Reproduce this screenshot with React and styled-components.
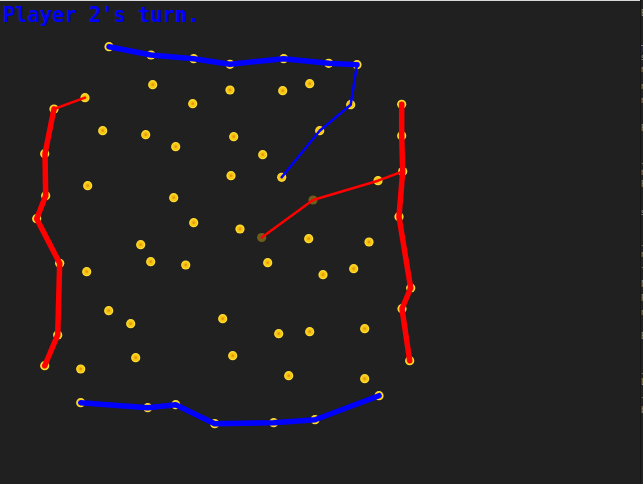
import styled, { createGlobalStyle } from "styled-components";

const GlobalStyle = createGlobalStyle`
  html, body {
    margin: 0;
    padding: 0;
    background: #202020;
  }
  body {
    font-family: "DejaVu Sans Mono", "Liberation Mono", monospace;
  }
`;

const Screen = styled.div`
  display: flex;
  width: 643px;
  height: 484px;
  overflow: hidden;
  background: #202020;
`;

const Board = styled.div`
  position: relative;
  width: 640px;
  height: 484px;
  flex: none;
  box-shadow: inset 0 1px 0 #d9d9d9;
`;

const Status = styled.h1`
  position: absolute;
  top: 5px;
  left: 3px;
  margin: 0;
  font-family: "DejaVu Sans Mono", "Liberation Mono", monospace;
  font-weight: bold;
  font-size: 20.4px;
  line-height: 20px;
  color: #0000ff;
  white-space: pre;
`;

const Canvas = styled.svg`
  display: block;
  width: 640px;
  height: 484px;
`;

const Sidebar = styled.div`
  flex: 1;
  display: flex;
  flex-direction: column;
  overflow: hidden;
  background: #222;
  border-left: 1px solid #151515;
`;

const SideLabel = styled.span`
  display: block;
  margin-top: ${(p) => p.$gap}px;
  font-family: "DejaVu Sans", sans-serif;
  font-size: 8px;
  line-height: 8px;
  color: #8a8a8a;
  white-space: nowrap;
`;

const dots = [
  [109, 46.7], [151, 55], [193.7, 58.7], [230, 64.3], [283.7, 58.7], [328.7, 63.3], [357, 64.7],
  [152.7, 84.7], [85, 97.7], [192.7, 103.7], [230, 90], [282.7, 90.7], [309.7, 83.7],
  [54, 109], [102.7, 130.7], [145.7, 134.7], [175.7, 146.7], [233.7, 136.7], [262.7, 154.7],
  [350.7, 104.7], [319.7, 130.7], [401.7, 104.3], [401.7, 135.7],
  [44.7, 153.7], [87.7, 185.7], [173.7, 197.7], [231, 175.7], [281.7, 177.3], [402.7, 171.5], [378, 180.7],
  [45.7, 195.7], [36.7, 218.7], [193.7, 222.7], [240, 229], [399, 216.7],
  [140.7, 244.7], [150.7, 261.7], [185.7, 265], [267.7, 262.7], [308.7, 238.7], [369, 242],
  [323, 274.7], [353.7, 268.7], [59.7, 263.3], [86.7, 271.7], [410.7, 288], [402, 308.7],
  [108.7, 310.7], [130.7, 323.7], [222.7, 318.7], [278.7, 333.7], [309.7, 331.7], [364.7, 328.7],
  [57.7, 335], [135.7, 357.7], [232.7, 355.7], [409.7, 360.7],
  [44.7, 365.7], [80.7, 369], [288.7, 375.7], [364.7, 378.7],
  [80.7, 402.7], [147.7, 407.7], [175.7, 404.7], [214.7, 423.7], [273.7, 422.7], [315, 419.7], [379, 395.7],
];

const visited = [
  [313, 200],
  [261.7, 237.5],
];

const paths = [
  // player 1 (red)
  { color: "#ff0000", width: 2.5, pts: [[85, 97.7], [54, 109]] },
  {
    color: "#ff0000",
    width: 5.5,
    pts: [[54, 109], [45, 153.7], [45.7, 195.7], [36.7, 218.7], [59.7, 263.3], [57.7, 335], [44.7, 365.7]],
  },
  {
    color: "#ff0000",
    width: 5.5,
    pts: [[401.7, 104.3], [401.7, 135.7], [402.7, 171.5], [399, 216.7], [410.7, 288], [402, 308.7], [409.7, 360.7]],
  },
  { color: "#ff0000", width: 2.5, pts: [[402.7, 171.5], [378, 180.7], [313, 200], [261.7, 237.5]] },
  // player 2 (blue)
  {
    color: "#0000ff",
    width: 5.5,
    pts: [[109, 46.7], [151, 55], [193.7, 58.7], [230, 64.3], [283.7, 58.7], [328.7, 63.3], [357, 64.7]],
  },
  { color: "#0000ff", width: 2.5, pts: [[357, 64.7], [350.7, 104.7], [319.7, 130.7], [281.7, 177.3]] },
  {
    color: "#0000ff",
    width: 5.5,
    pts: [[80.7, 402.7], [147.7, 407.7], [175.7, 404.7], [214.7, 423.7], [273.7, 422.7], [315, 419.7], [379, 395.7]],
  },
];

const sideLabels = [
  { gap: 10, text: "Ed" }, { gap: 28, text: "T·" }, { gap: 0, text: "s." },
  { gap: 4, text: "n:" }, { gap: 9, text: "n." }, { gap: 6, text: "r" },
  { gap: 20, text: "F" }, { gap: 28, text: "·" }, { gap: 0, text: "r·" },
  { gap: 4, text: "F" }, { gap: 20, text: "s:" }, { gap: 26, text: "·" },
  { gap: 0, text: "n·" }, { gap: 6, text: "·" }, { gap: 8, text: "M" },
  { gap: 6, text: "F" }, { gap: 6, text: "r" }, { gap: 16, text: "E" },
  { gap: 30, text: "·" }, { gap: 0, text: "L" }, { gap: 8, text: "·" },
  { gap: 4, text: "b" },
];

function Dot({ x, y }) {
  return (
    <g>
      <circle cx={x} cy={y} r={4.6} fill="#ffdd33" />
      <circle cx={x} cy={y} r={3.4} fill="#f7c613" />
      <circle cx={x} cy={y} r={1.4} fill="#e49a10" />
    </g>
  );
}

function Line({ color, width, pts }) {
  return (
    <polyline
      points={pts.map((p) => p.join(",")).join(" ")}
      fill="none"
      stroke={color}
      strokeWidth={width}
      strokeLinejoin="round"
      strokeLinecap="round"
    />
  );
}

export default function App() {
  return (
    <>
      <GlobalStyle />
      <Screen>
        <Board>
          <Canvas viewBox="0 0 640 484">
            {dots.map(([x, y], i) => (
              <Dot key={i} x={x} y={y} />
            ))}
            {visited.map(([x, y], i) => (
              <circle key={i} cx={x} cy={y} r={4.6} fill="#6e5e1c" />
            ))}
            {paths.map((p, i) => (
              <Line key={i} {...p} />
            ))}
          </Canvas>
          <Status>Player 2's turn.</Status>
        </Board>
        <Sidebar>
          {sideLabels.map((l, i) => (
            <SideLabel key={i} $gap={l.gap}>
              {l.text}
            </SideLabel>
          ))}
        </Sidebar>
      </Screen>
    </>
  );
}
